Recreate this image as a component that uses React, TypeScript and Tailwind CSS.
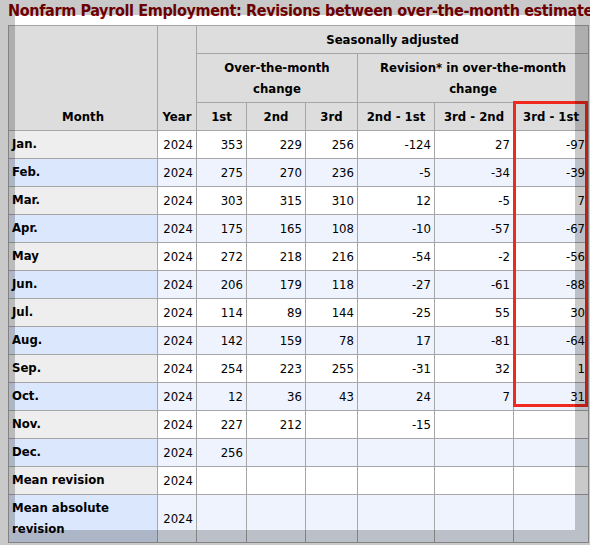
const rows: Array<[string, string, string, string, string, string, string]> = [
  ["Jan.", "353", "229", "256", "-124", "27", "-97"],
  ["Feb.", "275", "270", "236", "-5", "-34", "-39"],
  ["Mar.", "303", "315", "310", "12", "-5", "7"],
  ["Apr.", "175", "165", "108", "-10", "-57", "-67"],
  ["May", "272", "218", "216", "-54", "-2", "-56"],
  ["Jun.", "206", "179", "118", "-27", "-61", "-88"],
  ["Jul.", "114", "89", "144", "-25", "55", "30"],
  ["Aug.", "142", "159", "78", "17", "-81", "-64"],
  ["Sep.", "254", "223", "255", "-31", "32", "1"],
  ["Oct.", "12", "36", "43", "24", "7", "31"],
  ["Nov.", "227", "212", "", "-15", "", ""],
  ["Dec.", "256", "", "", "", "", ""],
  ["Mean revision", "", "", "", "", "", ""],
  ["Mean absolute revision", "", "", "", "", "", ""],
];

const th = "border border-[#a6a6a6] bg-[#dddddd] px-[3px] py-[3px] font-bold text-center leading-[21px]";
const td = "border border-[#a6a6a6] px-[3px] py-[3px] text-right leading-[21px]";

export default function App() {
  return (
    <div
      className="relative w-[590px] h-[545px] overflow-hidden bg-white px-2 text-black"
      style={{ fontFamily: '"DejaVu Sans Condensed", "DejaVu Sans", sans-serif' }}
    >
      <div className="whitespace-nowrap text-[16px] font-bold leading-[22px] tracking-[-0.35px] text-[#880000] mb-[3px]">
        Nonfarm Payroll Employment: Revisions between over-the-month estimates
      </div>

      <table className="table-fixed w-[580px] text-[13px]">
        <colgroup>
          <col className="w-[149px]" />
          <col className="w-[39px]" />
          <col className="w-[50px]" />
          <col className="w-[59px]" />
          <col className="w-[52px]" />
          <col className="w-[77px]" />
          <col className="w-[79px]" />
          <col className="w-[75px]" />
        </colgroup>
        <thead>
          <tr>
            <th rowSpan={3} className={`${th} align-bottom`}>Month</th>
            <th rowSpan={3} className={`${th} align-bottom`}>Year</th>
            <th colSpan={6} className={th}>Seasonally adjusted</th>
          </tr>
          <tr>
            <th colSpan={3} className={`${th} leading-[20px]`}>Over-the-month change</th>
            <th colSpan={3} className={`${th} leading-[20px]`}>Revision* in over-the-month change</th>
          </tr>
          <tr>
            <th className={th}>1st</th>
            <th className={th}>2nd</th>
            <th className={th}>3rd</th>
            <th className={th}>2nd - 1st</th>
            <th className={th}>3rd - 2nd</th>
            <th className={th}>3rd - 1st</th>
          </tr>
        </thead>
        <tbody>
          {rows.map((r, i) => {
            const alt = i % 2 === 1;
            return (
              <tr key={r[0]} className={alt ? "bg-[#eef3fe]" : "bg-white"}>
                <td
                  className={`border border-[#a6a6a6] px-[3px] py-[3px] text-left font-bold leading-[20.5px] ${
                    alt ? "bg-[#dae7fc]" : "bg-[#eeeeee]"
                  }`}
                >
                  {r[0]}
                </td>
                <td className={td}>2024</td>
                {r.slice(1).map((v, j) => (
                  <td key={j} className={td}>
                    {v}
                  </td>
                ))}
              </tr>
            );
          })}
        </tbody>
      </table>

      {/* highlight around the 3rd - 1st column */}
      <div className="pointer-events-none absolute left-[513px] top-[101px] w-[75px] h-[306px] border-[3px] border-[#f0281e]" />

      {/* dimmed frame of the capture */}
      <div className="pointer-events-none absolute left-[15px] top-[15px] w-[560px] h-[515px] shadow-[0_0_0_700px_rgba(0,0,0,0.21)]" />
    </div>
  );
}
